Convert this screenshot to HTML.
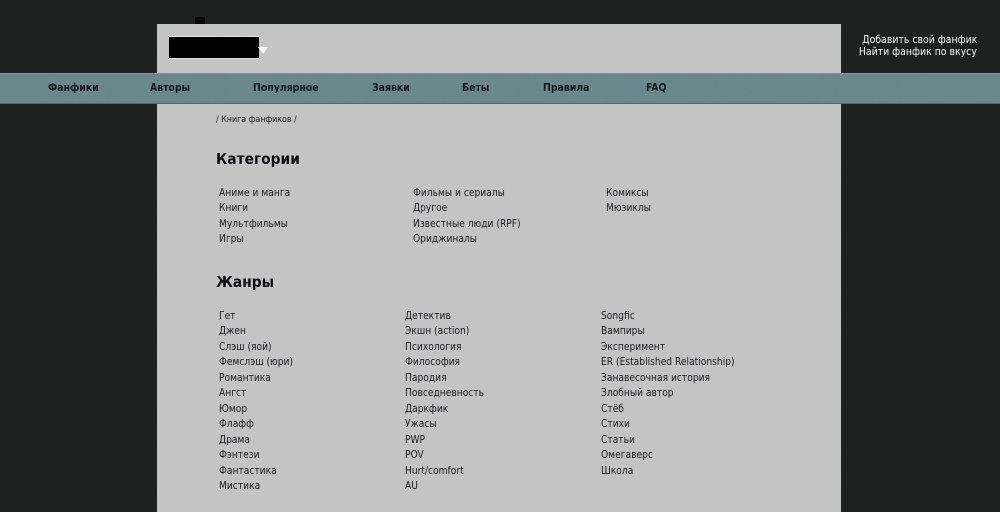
<!DOCTYPE html>
<html lang="ru"><head><meta charset="utf-8"><title>Книга фанфиков</title>
<style>
html,body{margin:0;padding:0;width:1000px;height:512px;overflow:hidden;background:#1e1f1f}
body{position:relative;font-family:"DejaVu Sans","Liberation Sans",sans-serif;font-size:11px;color:#18181c}
.a{position:absolute;white-space:nowrap;line-height:15px;transform-origin:0 0}
#panel{position:absolute;left:157px;top:24px;width:684px;height:488px;background:#c3c3c3}
#bar{position:absolute;left:0;top:73px;width:1000px;height:31px;background:#678589;border-top:1px solid #7d9497;box-sizing:border-box;border-bottom:1px solid #50686c}
#logo{position:absolute;left:169px;top:37px;width:90px;height:21px;background:#000;border-top:1px solid #e4e4e4;border-bottom:1px solid #e4e4e4;margin-top:-1px}
#tri{position:absolute;left:258px;top:47px;width:0;height:0;border-left:5px solid transparent;border-right:5px solid transparent;border-top:7px solid #f6f6f6}
#nub{position:absolute;left:195px;top:17px;width:10px;height:7px;background:#0a0a0a}
.n{font-weight:bold;font-size:10.5px;color:#11171c;top:81px;transform:scaleX(.89)}
.w{color:#f6f6f6;font-size:11px;transform:scaleX(.85);transform-origin:100% 0;right:23px}
h2{position:absolute;margin:0;font-size:15px;line-height:18px;color:#0c0c10;left:216px;font-weight:bold;transform:scaleX(.92);transform-origin:0 0;white-space:nowrap}
.col{position:absolute;white-space:nowrap;line-height:15.45px;transform:scaleX(.83);transform-origin:0 0}
#noise{position:absolute;left:0;top:0;width:1000px;height:512px;pointer-events:none;opacity:.1;mix-blend-mode:overlay}
</style></head><body>
<div id="panel"></div>
<div id="nub"></div>
<div id="logo"></div><div id="tri"></div>
<div class="a w" style="top:32px">Добавить свой фанфик</div>
<div class="a w" style="top:44px">Найти фанфик по вкусу</div>
<div id="bar"></div>
<div class="a n" style="left:48px">Фанфики</div>
<div class="a n" style="left:150px">Авторы</div>
<div class="a n" style="left:253px">Популярное</div>
<div class="a n" style="left:372px">Заявки</div>
<div class="a n" style="left:462px">Беты</div>
<div class="a n" style="left:543px">Правила</div>
<div class="a n" style="left:646px">FAQ</div>
<div class="a" style="left:216px;top:113px;font-size:8.5px;transform:scaleX(.93)">/ Книга фанфиков /</div>
<h2 style="top:150px">Категории</h2>
<div class="col" style="left:219px;top:185px">Аниме и манга<br>Книги<br>Мультфильмы<br>Игры</div>
<div class="col" style="left:413px;top:185px">Фильмы и сериалы<br>Другое<br>Известные люди (RPF)<br>Ориджиналы</div>
<div class="col" style="left:606px;top:185px">Комиксы<br>Мюзиклы</div>
<h2 style="top:273px">Жанры</h2>
<div class="col" style="left:219px;top:308px">Гет<br>Джен<br>Слэш (яой)<br>Фемслэш (юри)<br>Романтика<br>Ангст<br>Юмор<br>Флафф<br>Драма<br>Фэнтези<br>Фантастика<br>Мистика</div>
<div class="col" style="left:405px;top:308px">Детектив<br>Экшн (action)<br>Психология<br>Философия<br>Пародия<br>Повседневность<br>Даркфик<br>Ужасы<br>PWP<br>POV<br>Hurt/comfort<br>AU</div>
<div class="col" style="left:601px;top:308px">Songfic<br>Вампиры<br>Эксперимент<br>ER (Established Relationship)<br>Занавесочная история<br>Злобный автор<br>Стёб<br>Стихи<br>Статьи<br>Омегаверс<br>Школа</div>
<svg id="noise" width="1000" height="512" xmlns="http://www.w3.org/2000/svg"><filter id="f"><feTurbulence type="fractalNoise" baseFrequency=".9" numOctaves="2" seed="3"/><feColorMatrix type="saturate" values="0"/></filter><rect width="1000" height="512" filter="url(#f)"/></svg>
</body></html>
